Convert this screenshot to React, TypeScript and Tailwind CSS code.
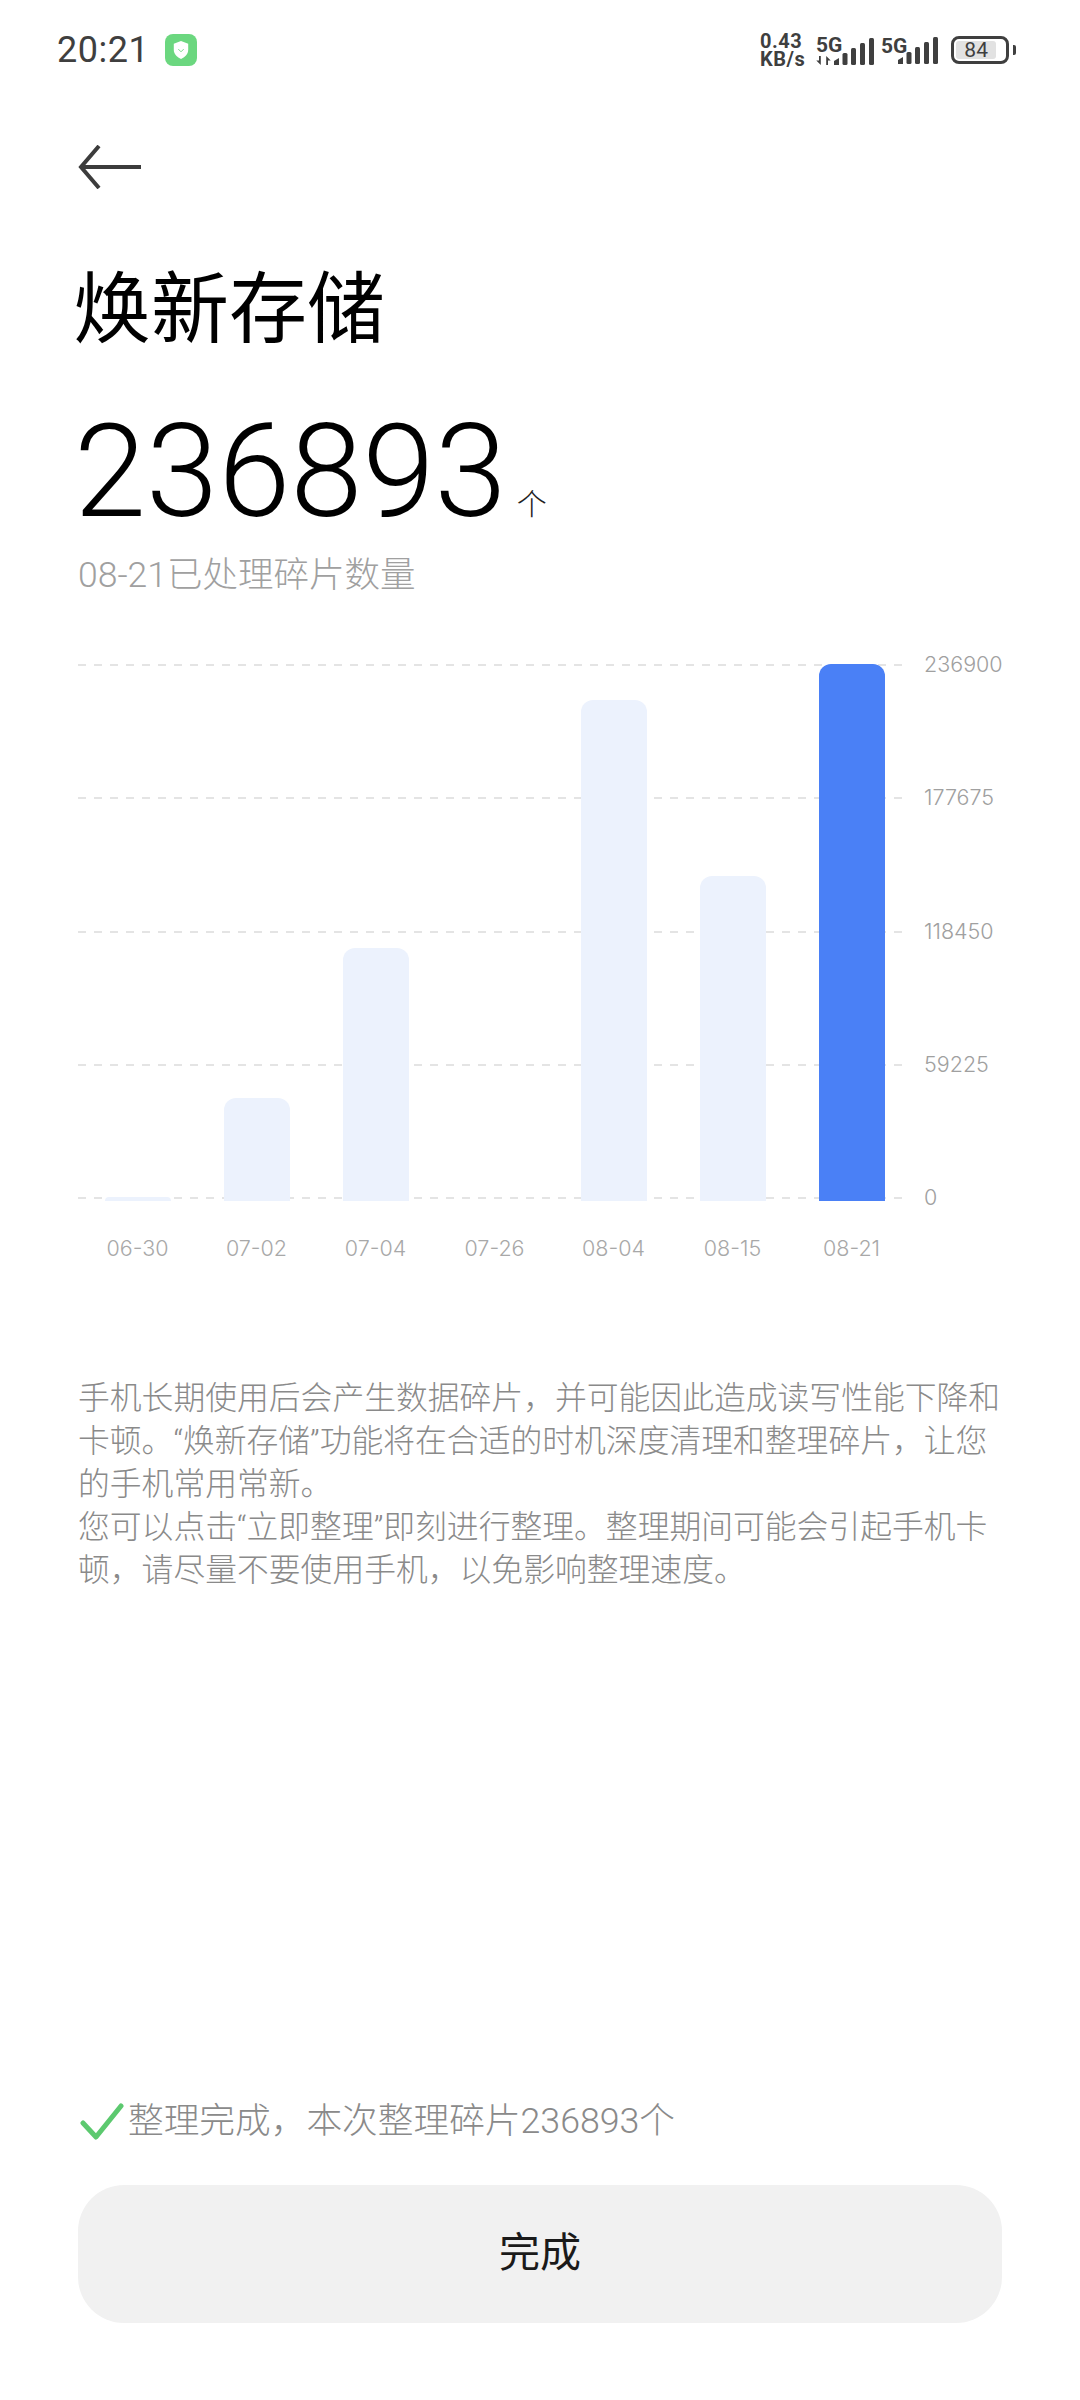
const BARS = [
    { label: '06-30', height: 4 },
    { label: '07-02', height: 103 },
    { label: '07-04', height: 253 },
    { label: '07-26', height: 0 },
    { label: '08-04', height: 501 },
    { label: '08-15', height: 325 },
    { label: '08-21', height: 537, active: true },
]

const TICKS = ['236900', '177675', '118450', '59225', '0']

const SANS = "font-['Roboto','Noto_Sans_CJK_SC',sans-serif]"

function SignalBars() {
    return (
        <svg viewBox="0 0 40 27" className="h-[27px] w-[40px] shrink-0" fill="#3f3f3f">
            <path d="M0 27v-4l5-3v7z" />
            <rect x="8.5" y="15" width="5" height="12" rx="1.5" />
            <rect x="17" y="10" width="5" height="17" rx="1.5" />
            <rect x="26" y="5" width="5" height="22" rx="1.5" />
            <rect x="35" y="0" width="5" height="27" rx="1.5" />
        </svg>
    )
}

function StatusBar() {
    return (
        <div className="flex h-[100px] items-center justify-between pl-[57px] pr-[64px]">
            <div className="flex items-center gap-[16px]">
                <span className="text-[36px] leading-none tracking-[0.5px] text-[#3f3f3f]">20:21</span>
                <span className="flex h-[32px] w-[32px] items-center justify-center rounded-[8px] bg-[#6bd77f]">
                    <svg viewBox="0 0 20 22" className="h-[20px] w-[18px]">
                        <path d="M10 1l8 3v7c0 5-4 8-8 10-4-2-8-5-8-10V4z" fill="#fff" />
                        <path d="M7 10l3 3 3-3" fill="none" stroke="#6bd77f" strokeWidth="1" />
                    </svg>
                </span>
            </div>
            <div className="flex items-center text-[#3f3f3f]">
                <div className="w-[56px] text-[20px] font-bold leading-[18px] tracking-[0.5px]">
                    0.43
                    <br />
                    KB/s
                </div>
                <div className="flex w-[58px] items-end">
                    <div className="flex w-[18px] shrink-0 flex-col">
                        <span className="w-[26px] text-[21px] font-bold leading-[19px]">5G</span>
                        <svg viewBox="0 0 16 10" className="mt-[1px] h-[9px] w-[15px]" fill="#3f3f3f">
                            <path d="M0 5h3V0h2v10zM11 0l5 5h-3v5h-2z" />
                        </svg>
                    </div>
                    <SignalBars />
                </div>
                <div className="ml-[7px] flex w-[57px] items-end">
                    <span className="w-[17px] shrink-0 self-start text-[21px] font-bold leading-[19px]">5G</span>
                    <SignalBars />
                </div>
                <div className="ml-[13px] flex items-center gap-[4px]">
                    <div className="flex h-[28px] w-[58px] items-center rounded-[8px] border-[3px] border-[#3f3f3f] p-[2px]">
                        <div className="flex h-full w-[84%] items-center justify-center rounded-[3px] bg-[#e2e2e2] text-[21px] leading-none">
                            84
                        </div>
                    </div>
                    <div className="h-[10px] w-[3px] rounded-r-[2px] bg-[#3f3f3f]" />
                </div>
            </div>
        </div>
    )
}

function Chart() {
    return (
        <div className="ml-[78px] mt-[65px] w-[1002px]">
            <div className="relative h-[535px] w-[827px]">
                <div className="absolute inset-0 flex flex-col justify-between">
                    {TICKS.map(tick => (
                        <div key={tick} className="relative h-[2px] w-full bg-[repeating-linear-gradient(to_right,#e4e4e4_0,#e4e4e4_8px,transparent_8px,transparent_16px)]">
                            <span className="absolute left-[846px] top-[-15px] font-['Inter',sans-serif] text-[21.5px] font-light leading-[30px] text-[#a0a0a0]">
                                {tick}
                            </span>
                        </div>
                    ))}
                </div>
                <div className="absolute inset-x-0 bottom-[-2px] flex items-end">
                    {BARS.map(bar => (
                        <div key={bar.label} className="flex w-[119px] shrink-0 justify-center">
                            <div
                                className={`w-[66px] rounded-t-[12px] ${bar.active ? 'bg-[#4a80f6]' : 'bg-[#ecf2fd]'}`}
                                style={{ height: bar.height }}
                            />
                        </div>
                    ))}
                </div>
            </div>
            <div className="mt-[34px] flex w-[840px]">
                {BARS.map(bar => (
                    <div key={bar.label} className="w-[119px] shrink-0 text-center font-['Inter',sans-serif] text-[21.5px] font-light leading-[30px] text-[#a8a8a8]">
                        {bar.label}
                    </div>
                ))}
            </div>
        </div>
    )
}

export default function App() {
    return (
        <div className={`flex h-[2400px] w-[1080px] flex-col bg-white ${SANS}`}>
            <StatusBar />
            <div className="ml-[78px] mt-[45px] h-[52px]">
                <svg viewBox="0 0 64 44" className="h-[44px] w-[64px]" fill="none" stroke="#3c3c3c" strokeWidth="4">
                    <path d="M21 1L3 22l18 21M3 22h60" />
                </svg>
            </div>
            <h1 className="ml-[73px] mt-[64px] text-[78px] font-normal leading-[100px] text-black">焕新存储</h1>
            <div className="ml-[74px] mt-[36px] flex items-end">
                <span className="text-[130px] font-light leading-[150px] text-black">236893</span>
                <span className="mb-[22px] ml-[10px] text-[30px] font-light leading-[40px] text-[#222222]">个</span>
            </div>
            <p className="ml-[78px] mt-[4px] text-[35.5px] font-light leading-[48px] text-[#a0a0a0]">08-21已处理碎片数量</p>
            <Chart />
            <div className="ml-[78px] mt-[114px] w-[930px] text-[31.8px] font-light leading-[43px] text-[#8a8a8a]">
                <p>手机长期使用后会产生数据碎片，并可能因此造成读写性能下降和卡顿。“焕新存储”功能将在合适的时机深度清理和整理碎片，让您的手机常用常新。</p>
                <p>您可以点击“立即整理”即刻进行整理。整理期间可能会引起手机卡顿，请尽量不要使用手机，以免影响整理速度。</p>
            </div>
            <div className="mt-auto pb-[77px]">
                <div className="ml-[80px] flex items-center">
                    <svg viewBox="0 0 44 37" className="h-[37px] w-[44px]" fill="none" stroke="#5cc96f" strokeWidth="5" strokeLinecap="round" strokeLinejoin="round">
                        <path d="M3 20l13 14L41 3" />
                    </svg>
                    <span className="ml-[4px] text-[35.7px] font-light leading-[50px] text-[#8a8a8a]">整理完成，本次整理碎片236893个</span>
                </div>
                <button className="mx-[78px] mt-[39px] flex h-[138px] w-[924px] items-center justify-center rounded-[46px] bg-[#f1f1f1] text-[41px] text-[#1a1a1a]">
                    完成
                </button>
            </div>
        </div>
    )
}
